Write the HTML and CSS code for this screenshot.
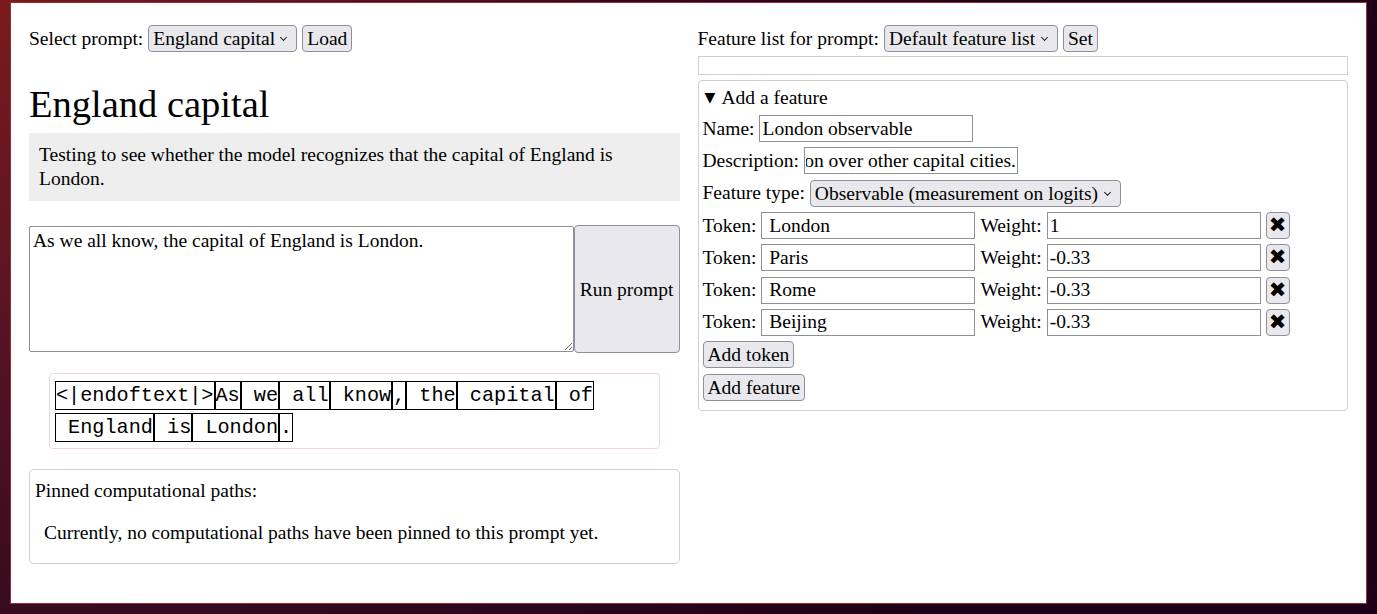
FILE: index.html
```html
<!DOCTYPE html>
<html>
<head>
<meta charset="utf-8">
<title>England capital</title>
<link rel="stylesheet" href="styles.css">
</head>
<body>
<div class="panel">
  <div class="col">
    <div class="toprow">
      <span>Select prompt:</span>
      <span class="sel"><select class="dd"><option>England capital</option></select></span>
      <button class="btn">Load</button>
    </div>
    <h1 class="title">England capital</h1>
    <div class="desc">Testing to see whether the model recognizes that the capital of England is London.</div>
    <div class="prompt-row">
      <textarea class="prompt">As we all know, the capital of England is London.</textarea>
      <button class="btn run">Run prompt</button>
    </div>
    <div class="tokens">
      <span class="tok">&lt;|endoftext|&gt;</span><span class="tok">As</span><span class="tok">&nbsp;we</span><span class="tok">&nbsp;all</span><span class="tok">&nbsp;know</span><span class="tok">,</span><span class="tok">&nbsp;the</span><span class="tok">&nbsp;capital</span><span class="tok">&nbsp;of</span><span class="tok">&nbsp;England</span><span class="tok">&nbsp;is</span><span class="tok">&nbsp;London</span><span class="tok">.</span>
    </div>
    <div class="pinned">
      <div class="pinned-title">Pinned computational paths:</div>
      <p class="pinned-empty">Currently, no computational paths have been pinned to this prompt yet.</p>
    </div>
  </div>
  <div class="col">
    <div class="toprow">
      <span>Feature list for prompt:</span>
      <span class="sel"><select class="dd"><option>Default feature list</option></select></span>
      <button class="btn">Set</button>
    </div>
    <div class="emptybox"></div>
    <details class="feature" open>
      <summary class="summary">Add a feature</summary>
      <div class="frow"><span>Name:</span><input class="field" type="text" value="London observable"></div>
      <div class="frow"><span>Description:</span><input class="field field-end" type="text" value="Measures the preference of the model for London over other capital cities.&#x200E;"></div>
      <div class="frow"><span>Feature type:</span><span class="sel"><select class="dd"><option>Observable (measurement on logits)</option></select></span></div>
      <div class="frow"><span>Token:</span><input class="field" type="text" value=" London"><span>Weight:</span><input class="field" type="text" value="1"><button class="btn xbtn">✖</button></div>
      <div class="frow"><span>Token:</span><input class="field" type="text" value=" Paris"><span>Weight:</span><input class="field" type="text" value="-0.33"><button class="btn xbtn">✖</button></div>
      <div class="frow"><span>Token:</span><input class="field" type="text" value=" Rome"><span>Weight:</span><input class="field" type="text" value="-0.33"><button class="btn xbtn">✖</button></div>
      <div class="frow"><span>Token:</span><input class="field" type="text" value=" Beijing"><span>Weight:</span><input class="field" type="text" value="-0.33"><button class="btn xbtn">✖</button></div>
      <div class="frow"><button class="btn">Add token</button></div>
      <div class="frow"><button class="btn">Add feature</button></div>
    </details>
  </div>
</div>
</body>
</html>
```

FILE: styles.css
```css
html, body {
  margin: 0;
  height: 100%;
}
body {
  background: radial-gradient(circle at 0 0, #7a1a1c 0, #5a1424 300px, #33091f 650px, #1d0017 1100px);
  padding: 2px 10px 0 10px;
  box-sizing: border-box;
  overflow: hidden;
  font-family: "Liberation Serif", "Times New Roman", serif;
  font-size: 19.5px;
  color: #000;
}
.panel {
  box-sizing: border-box;
  width: 1357px;
  height: 602px;
  background: #fff;
  border: 1px solid #a02a34;
  padding: 18px;
  display: grid;
  grid-template-columns: 1fr 1fr;
  column-gap: 18px;
  align-items: start;
}
.col {
  display: flex;
  flex-direction: column;
  min-width: 0;
}
.toprow {
  display: flex;
  align-items: center;
  gap: 5px;
  margin-top: 4px;
  height: 27px;
}
.btn {
  font-family: inherit;
  font-size: inherit;
  color: #000;
  background: #e9e9ed;
  border: 1px solid #8f8f9d;
  border-radius: 4px;
  padding: 0 4px;
  height: 27px;
  line-height: 23px;
  margin: 0;
}
.sel {
  position: relative;
  display: inline-flex;
}
.sel::after {
  content: "";
  position: absolute;
  right: 11px;
  top: 10px;
  width: 4px;
  height: 4px;
  border-right: 1.6px solid #222;
  border-bottom: 1.6px solid #222;
  transform: rotate(45deg);
  pointer-events: none;
}
.dd {
  appearance: none;
  -webkit-appearance: none;
  font-family: inherit;
  font-size: inherit;
  color: #000;
  background: #e9e9ed;
  border: 1px solid #8f8f9d;
  border-radius: 4px;
  height: 27px;
  padding: 0 21px 0 4px;
  margin: 0;
  line-height: 23px;
}
.title {
  font-weight: normal;
  font-size: 38.5px;
  line-height: 44px;
  margin: 30px 0 7px;
}
.desc {
  background: #eeeeee;
  padding: 10px;
  line-height: 24px;
}
.prompt-row {
  display: flex;
  align-items: center;
  margin-top: 24px;
  height: 128px;
}
.prompt {
  flex: 1;
  box-sizing: border-box;
  height: 126px;
  font-family: inherit;
  font-size: inherit;
  border: 1px solid #8f8f9d;
  border-radius: 2px;
  padding: 2px 3px;
  margin: 0;
  resize: both;
  line-height: 23px;
}
.run {
  width: 106px;
  height: 128px;
  padding: 0;
}
.tokens {
  margin: 20px 20px 0;
  border: 1px solid #f0d6d6;
  border-radius: 4px;
  padding: 7px 5px 6px 5px;
  display: flex;
  flex-wrap: wrap;
  row-gap: 3px;
}
.tok {
  font-family: "Liberation Mono", "DejaVu Sans Mono", monospace;
  font-size: 20.2px;
  line-height: 23px;
  padding: 2px 0;
  border: 1px solid #000;
  white-space: pre;
}
.pinned {
  margin-top: 20px;
  border: 1px solid #d0d0d0;
  border-radius: 5px;
  padding: 9px 5px 0;
}
.pinned-title {
  line-height: 24px;
}
.pinned-empty {
  margin: 18px 0 18px 9px;
  line-height: 24px;
}
.emptybox {
  margin-top: 4px;
  height: 19px;
  box-sizing: border-box;
  border: 1px solid #cfcfcf;
}
.feature {
  margin-top: 5px;
  border: 1px solid #cfcfcf;
  border-radius: 4px;
  padding: 4px;
}
.summary {
  line-height: 24px;
  list-style: none;
  cursor: default;
}
.summary::-webkit-details-marker {
  display: none;
}
.summary::before {
  content: "\25BC";
  font-family: "DejaVu Sans", sans-serif;
  font-size: 14px;
  display: inline-block;
  width: 17px;
  padding-left: 2px;
  vertical-align: 2px;
}
.frow {
  display: flex;
  align-items: center;
  gap: 5px;
  margin: 5px 0;
  height: 27.3px;
}
.field {
  box-sizing: border-box;
  width: 214px;
  height: 27px;
  font-family: inherit;
  font-size: inherit;
  border: 1px solid #8f8f9d;
  padding: 0 2px;
  margin: 0;
  color: #000;
}
.field-end {
  direction: rtl;
  padding: 0 1px;
}
.xbtn {
  width: 24px;
  padding: 0;
  font-family: "DejaVu Sans", sans-serif;
  font-size: 21px;
  line-height: 25px;
  text-align: center;
}
```
